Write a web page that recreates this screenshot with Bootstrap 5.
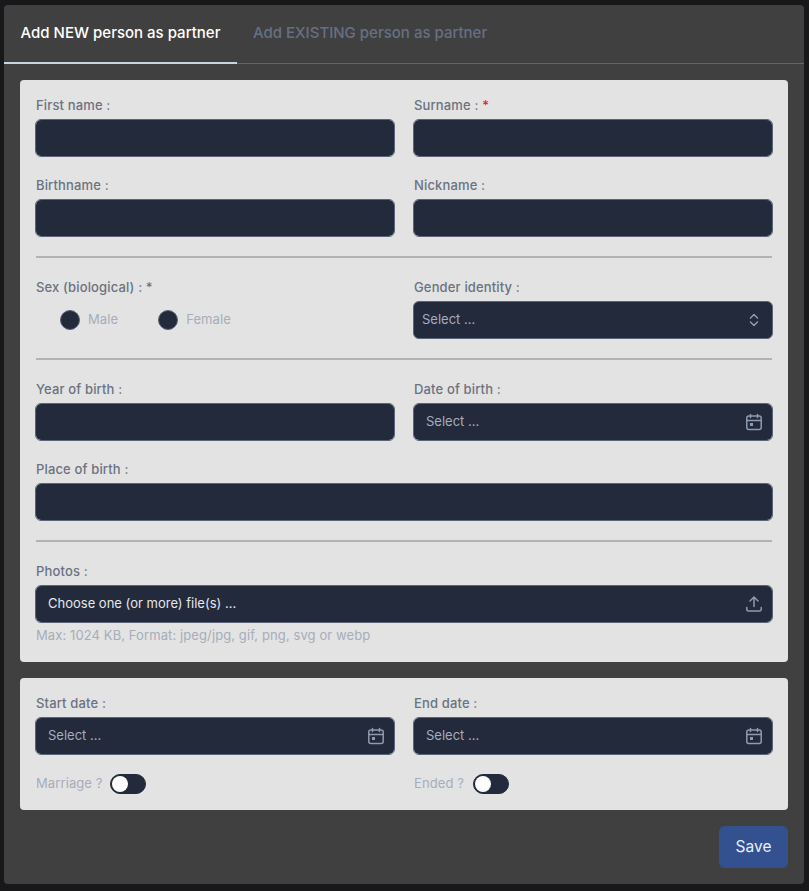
<!DOCTYPE html>
<html lang="en">
<head>
  <meta charset="UTF-8">
  <title>Add partner</title>
  <link href="https://cdn.jsdelivr.net/npm/bootstrap@5.3.3/dist/css/bootstrap.min.css" rel="stylesheet">
  <style>
    body { background: #18181b; font-family: Inter, "Noto Sans", sans-serif; height: 891px; overflow: hidden; }
    .dlg-box { width: 800px; height: 879px; margin: 5px 0 0 4px; background: #404040; border-radius: 4px; }
    .dlg-tabs { height: 59px; border-bottom: 1px solid #5b6478; margin: 0; }
    .dlg-tabs .nav-link { height: 58px; padding: 0 16px 2px; border: 0; border-radius: 0; background: none; font-size: 15px; font-weight: 500; color: #667085; margin: 0; }
    .dlg-tabs .nav-link.active { color: #fff; border-bottom: 2px solid #cbd5e1; background: none; height: 59px; width: 233px; padding-bottom: 1px; }
    .pane { background: #e3e3e3; border-radius: 4px; margin: 16px 16px 0; padding: 15px 15px 16px; }
    .pane-main { padding-bottom: 17px; }
    .two-col { display: grid; grid-template-columns: 360px 360px; column-gap: 18px; row-gap: 18px; }
    .wide { grid-column: 1 / 3; }
    .fld-label { display: block; margin: 0 0 4px 1px; font-size: 13px; font-weight: 500; line-height: 20px; letter-spacing: .15px; color: #6b7280; }
    .fld-label i { font-style: normal; color: #dc2626; }
    .dark-input.form-control, .dark-input.form-select { height: 38px; padding: 0 12px 2px; background-color: #222a3c; border: 1px solid #5b6478; border-radius: 6px; color: #cbd5e1; font-size: 13px; box-shadow: none; }
    .dark-input.form-control::placeholder { color: #a6adbb; opacity: 1; }
    .dark-input.form-select { padding: 0 0 0 8px; color: #a6adbb; background-image: none; }
    .ico-wrap { position: relative; }
    .ico-wrap svg { position: absolute; right: 10px; top: 10px; width: 18px; height: 18px; fill: none; stroke: #8f9bb0; stroke-width: 1.5; stroke-linecap: round; stroke-linejoin: round; pointer-events: none; }
    .file-box { display: flex; align-items: center; color: #e5e7eb !important; padding-bottom: 0 !important; }
    .sep { height: 2px; margin: 19px 1px; background: #b3b3b3; border: 0; opacity: 1; }
    .radio-row { height: 38px; padding-left: 25px; gap: 40px; }
    .radio-row .form-check { display: flex; align-items: center; gap: 8px; margin: 0; padding: 0; min-height: 0; }
    .radio-row .form-check-input { width: 20px; height: 20px; margin: 0 0 1px; float: none; background: #222a3c; border: 1px solid #5b6478; }
    .soft-text { margin: 0; font-size: 13px; line-height: 20px; letter-spacing: .1px; color: #a6adbb; }
    .radio-row .soft-text, .toggle-row .soft-text { padding-bottom: 2px; }
    .hint { margin: 2px 0 0 1px; }
    .toggle-row { margin: 19px 0 0 1px; gap: 7px; height: 20px; }
    .toggle-row.second-toggle { gap: 9px; }
    .toggle-row .form-switch { padding: 0; margin: 0; min-height: 0; height: 20px; display: flex; }
    .toggle-row .form-check-input { width: 36px; height: 20px; margin: 0; float: none; background-color: #222a3c; border: 1px solid #222a3c; background-image: none; position: relative; box-shadow: none; }
    .toggle-row .form-check-input::after { content: ""; position: absolute; left: 1px; top: 1px; width: 16px; height: 16px; border-radius: 50%; background: #fff; }
    .btn-save { width: 69px; height: 42px; padding: 0; background: #34518f; border: 0; border-radius: 6px; color: #e5edff; font-size: 15.500px; font-weight: 400; }
  </style>
</head>
<body>
  <div class="dlg-box">
    <ul class="nav nav-tabs dlg-tabs">
      <li class="nav-item"><button class="nav-link active" type="button">Add NEW person as partner</button></li>
      <li class="nav-item"><button class="nav-link" type="button">Add EXISTING person as partner</button></li>
    </ul>

    <div class="pane pane-main">
      <div class="two-col">
        <div><label class="fld-label">First name :</label><input class="form-control dark-input" type="text"></div>
        <div><label class="fld-label">Surname : <i>*</i></label><input class="form-control dark-input" type="text"></div>
        <div><label class="fld-label">Birthname :</label><input class="form-control dark-input" type="text"></div>
        <div><label class="fld-label">Nickname :</label><input class="form-control dark-input" type="text"></div>
      </div>
      <hr class="sep">
      <div class="two-col">
        <div>
          <label class="fld-label">Sex (biological) : *</label>
          <div class="d-flex align-items-center radio-row">
            <div class="form-check"><input class="form-check-input" type="radio" name="sex" id="male"><label class="soft-text" for="male">Male</label></div>
            <div class="form-check"><input class="form-check-input" type="radio" name="sex" id="female"><label class="soft-text" for="female">Female</label></div>
          </div>
        </div>
        <div>
          <label class="fld-label">Gender identity :</label>
          <div class="ico-wrap">
            <select class="form-select dark-input"><option>Select ...</option></select>
            <svg viewBox="0 0 18 18"><path d="M5.500 7 9 3.500 12.500 7M5.500 11 9 14.500 12.500 11"/></svg>
          </div>
        </div>
      </div>
      <hr class="sep">
      <div class="two-col">
        <div><label class="fld-label">Year of birth :</label><input class="form-control dark-input" type="text"></div>
        <div>
          <label class="fld-label">Date of birth :</label>
          <div class="ico-wrap">
            <input class="form-control dark-input" type="text" placeholder="Select ...">
            <svg viewBox="0 0 18 18"><rect x="1.800" y="3" width="14.400" height="13.500" rx="2"/><path d="M1.800 7.500h14.400M5.500 1.500v3M12.500 1.500v3"/><rect x="5" y="10" width="3" height="3" fill="#8f9bb0" stroke="none"/></svg>
          </div>
        </div>
        <div class="wide"><label class="fld-label">Place of birth :</label><input class="form-control dark-input" type="text"></div>
      </div>
      <hr class="sep">
      <label class="fld-label">Photos :</label>
      <div class="ico-wrap">
        <div class="form-control dark-input file-box">Choose one (or more) file(s) ...</div>
        <svg viewBox="0 0 18 18"><path d="M9 11.500V2M5 6l4-4 4 4M1.800 12.500v2a1.500 1.500 0 0 0 1.500 1.500h11.400a1.500 1.500 0 0 0 1.500-1.500v-2"/></svg>
      </div>
      <p class="soft-text hint">Max: 1024 KB, Format: jpeg/jpg, gif, png, svg or webp</p>
    </div>

    <div class="pane">
      <div class="two-col">
        <div>
          <label class="fld-label">Start date :</label>
          <div class="ico-wrap">
            <input class="form-control dark-input" type="text" placeholder="Select ...">
            <svg viewBox="0 0 18 18"><rect x="1.800" y="3" width="14.400" height="13.500" rx="2"/><path d="M1.800 7.500h14.400M5.500 1.500v3M12.500 1.500v3"/><rect x="5" y="10" width="3" height="3" fill="#8f9bb0" stroke="none"/></svg>
          </div>
          <div class="d-flex align-items-center toggle-row">
            <label class="soft-text">Marriage ?</label>
            <div class="form-check form-switch"><input class="form-check-input" type="checkbox"></div>
          </div>
        </div>
        <div>
          <label class="fld-label">End date :</label>
          <div class="ico-wrap">
            <input class="form-control dark-input" type="text" placeholder="Select ...">
            <svg viewBox="0 0 18 18"><rect x="1.800" y="3" width="14.400" height="13.500" rx="2"/><path d="M1.800 7.500h14.400M5.500 1.500v3M12.500 1.500v3"/><rect x="5" y="10" width="3" height="3" fill="#8f9bb0" stroke="none"/></svg>
          </div>
          <div class="d-flex align-items-center toggle-row second-toggle">
            <label class="soft-text">Ended ?</label>
            <div class="form-check form-switch"><input class="form-check-input" type="checkbox"></div>
          </div>
        </div>
      </div>
    </div>

    <div class="d-flex justify-content-end mt-3 me-3">
      <button class="btn btn-save" type="button">Save</button>
    </div>
  </div>
  <script src="https://cdn.jsdelivr.net/npm/bootstrap@5.3.3/dist/js/bootstrap.bundle.min.js"></script>
</body>
</html>
